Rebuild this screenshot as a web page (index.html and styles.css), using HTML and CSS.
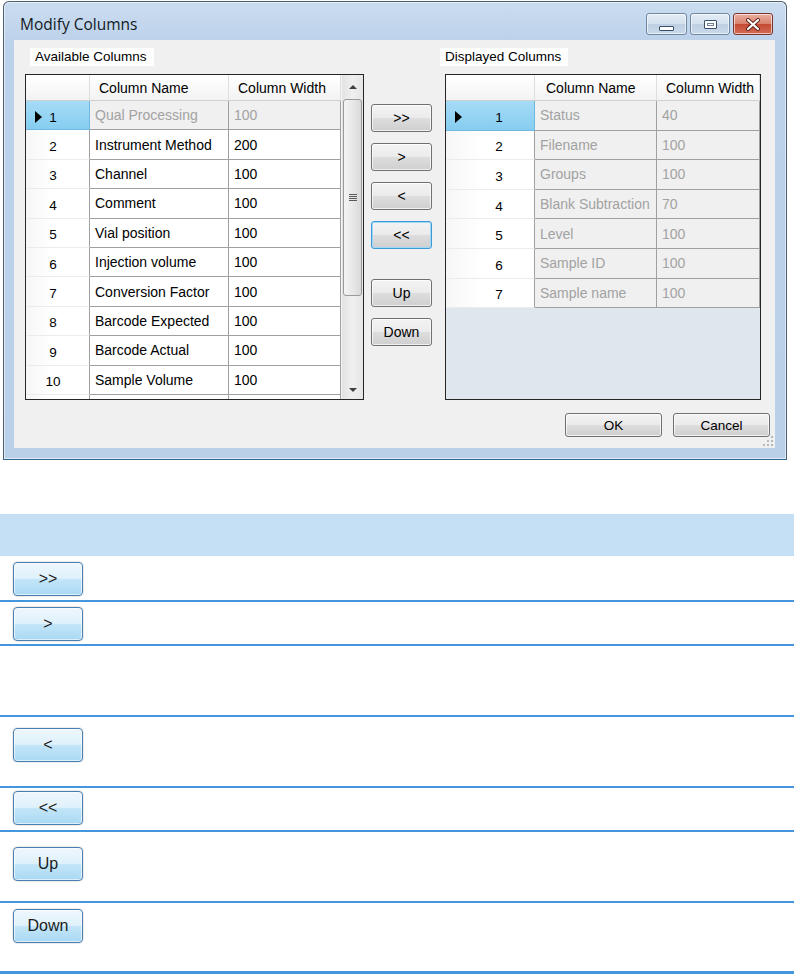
FILE: index.html
```html
<!DOCTYPE html>
<html lang="en">
<head>
  <meta charset="UTF-8">
  <title>Modify Columns</title>
  <link rel="stylesheet" href="styles.css">
</head>
<body>

  <!-- Dialog -->
  <div class="window">
    <div class="titlebar">
      <span class="title">Modify Columns</span>
      <div class="controls">
        <span class="ctl min"><i></i></span>
        <span class="ctl max"><i></i></span>
        <span class="ctl close">
          <svg width="16" height="13" viewBox="0 0 16 13">
            <path d="M3 2 L13 11 M13 2 L3 11" stroke="#5b2119" stroke-width="4" stroke-linecap="round"/>
            <path d="M3 2 L13 11 M13 2 L3 11" stroke="#ffffff" stroke-width="2.2" stroke-linecap="round"/>
          </svg>
        </span>
      </div>
    </div>

    <div class="client">
      <div class="lists">
        <div class="panel left-panel">
          <div class="label">Available Columns</div>
          <div class="grid">
            <div class="rows">
              <div class="row head">
                <div class="rh"></div>
                <div class="c name">Column Name</div>
                <div class="c width">Column Width</div>
              </div>
              <div class="row off">
                <div class="rh sel"><b class="arrow"></b>1</div>
                <div class="c name">Qual Processing</div>
                <div class="c width">100</div>
              </div>
              <div class="row"><div class="rh">2</div><div class="c name">Instrument Method</div><div class="c width">200</div></div>
              <div class="row"><div class="rh">3</div><div class="c name">Channel</div><div class="c width">100</div></div>
              <div class="row"><div class="rh">4</div><div class="c name">Comment</div><div class="c width">100</div></div>
              <div class="row"><div class="rh">5</div><div class="c name">Vial position</div><div class="c width">100</div></div>
              <div class="row"><div class="rh">6</div><div class="c name">Injection volume</div><div class="c width">100</div></div>
              <div class="row"><div class="rh">7</div><div class="c name">Conversion Factor</div><div class="c width">100</div></div>
              <div class="row"><div class="rh">8</div><div class="c name">Barcode Expected</div><div class="c width">100</div></div>
              <div class="row"><div class="rh">9</div><div class="c name">Barcode Actual</div><div class="c width">100</div></div>
              <div class="row"><div class="rh">10</div><div class="c name">Sample Volume</div><div class="c width">100</div></div>
              <div class="row"><div class="rh"></div><div class="c name"></div><div class="c width"></div></div>
            </div>
            <div class="vscroll">
              <div class="sb-btn"><b class="tri up"></b></div>
              <div class="thumb"><i></i><i></i><i></i><i></i></div>
              <div class="sb-fill"></div>
              <div class="sb-btn"><b class="tri down"></b></div>
            </div>
          </div>
        </div>

        <div class="movers">
          <button class="btn">&gt;&gt;</button>
          <button class="btn">&gt;</button>
          <button class="btn">&lt;</button>
          <button class="btn focus">&lt;&lt;</button>
          <button class="btn gap">Up</button>
          <button class="btn">Down</button>
        </div>

        <div class="panel right-panel">
          <div class="label">Displayed Columns</div>
          <div class="grid shown">
            <div class="rows">
              <div class="row head">
                <div class="rh"></div>
                <div class="c name">Column Name</div>
                <div class="c width">Column Width</div>
              </div>
              <div class="row off"><div class="rh sel"><b class="arrow"></b>1</div><div class="c name">Status</div><div class="c width">40</div></div>
              <div class="row off"><div class="rh">2</div><div class="c name">Filename</div><div class="c width">100</div></div>
              <div class="row off"><div class="rh">3</div><div class="c name">Groups</div><div class="c width">100</div></div>
              <div class="row off"><div class="rh">4</div><div class="c name">Blank Subtraction</div><div class="c width">70</div></div>
              <div class="row off"><div class="rh">5</div><div class="c name">Level</div><div class="c width">100</div></div>
              <div class="row off"><div class="rh">6</div><div class="c name">Sample ID</div><div class="c width">100</div></div>
              <div class="row off"><div class="rh">7</div><div class="c name">Sample name</div><div class="c width">100</div></div>
            </div>
          </div>
        </div>
      </div>

      <div class="actions">
        <button class="btn wide">OK</button>
        <button class="btn wide">Cancel</button>
      </div>

      <svg class="grip" width="10" height="10" viewBox="0 0 10 10">
        <rect x="8" y="0" width="2" height="2" fill="#b8b8b8"/>
        <rect x="4" y="4" width="2" height="2" fill="#b8b8b8"/>
        <rect x="8" y="4" width="2" height="2" fill="#b8b8b8"/>
        <rect x="0" y="8" width="2" height="2" fill="#b8b8b8"/>
        <rect x="4" y="8" width="2" height="2" fill="#b8b8b8"/>
        <rect x="8" y="8" width="2" height="2" fill="#b8b8b8"/>
      </svg>
    </div>
  </div>

  <!-- Button reference table -->
  <div class="ref">
    <div class="ref-head"></div>
    <div class="ref-row first p6"><span class="pic">&gt;&gt;</span></div>
    <div class="ref-row short p5"><span class="pic">&gt;</span></div>
    <div class="ref-row tall"></div>
    <div class="ref-row tall p11"><span class="pic">&lt;</span></div>
    <div class="ref-row short p3"><span class="pic">&lt;&lt;</span></div>
    <div class="ref-row tall p15"><span class="pic">Up</span></div>
    <div class="ref-row last p6"><span class="pic">Down</span></div>
  </div>

</body>
</html>
```

FILE: styles.css
```css
* {
  box-sizing: border-box;
}
body {
  margin: 0;
  background-color: #ffffff;
  font-family: "Liberation Sans", Arial, sans-serif;
  color: #000000;
}

/* Window frame */
.window {
  width: 784px;
  height: 459px;
  margin: 1px 0 0 3px;
  border: 1px solid #4b5d70;
  border-bottom-color: #2e6890;
  border-radius: 6px 6px 0 0;
  background: linear-gradient(to bottom, #cbdcef 0px, #bcd2ea 40px, #b9d0e9 100%);
  box-shadow: inset 0 0 0 1px rgba(255,255,255,0.55);
  display: flex;
  flex-direction: column;
}
.titlebar {
  height: 38px;
  display: flex;
  justify-content: space-between;
  align-items: flex-start;
  padding: 0 13px 0 16px;
}
.title {
  margin-top: 12px;
  font-family: "Open Sans", "Noto Sans", sans-serif;
  font-size: 15.5px;
  line-height: 20px;
  color: #121a24;
}
.controls {
  display: flex;
  gap: 3px;
  margin-top: 11px;
}
.ctl {
  width: 40px;
  height: 22px;
  border: 1px solid #6e88a4;
  border-radius: 3px;
  background: linear-gradient(to bottom, #e4edf7 0%, #d3e0ee 48%, #bfd0e4 52%, #c9d8ea 100%);
  box-shadow: inset 0 0 0 1px rgba(255,255,255,0.6);
  display: flex;
  justify-content: center;
}
.ctl.min {
  width: 41px;
  align-items: flex-end;
  padding-bottom: 3px;
}
.ctl.min i {
  width: 15px;
  height: 5px;
  background: #ffffff;
  border: 1px solid #39506a;
  border-radius: 1px;
}
.ctl.max {
  align-items: center;
}
.ctl.max i {
  width: 13px;
  height: 9px;
  border: 1px solid #39506a;
  border-radius: 1px;
  background: #ffffff;
  box-shadow: inset 0 0 0 2px #ffffff, inset 0 0 0 3px #6d8299;
}
.ctl.close {
  align-items: center;
  border-color: #7a3429;
  background: linear-gradient(to bottom, #eab0a2 0%, #d9826f 48%, #c54a33 52%, #d26c55 100%);
}

/* Client area */
.client {
  position: relative;
  height: 408px;
  margin: 0 11px 0 10px;
  padding: 8px 0 0 11px;
  background-color: #f0f0f0;
  font-size: 14px;
}
.lists {
  display: flex;
  align-items: flex-start;
}
.panel {
  display: flex;
  flex-direction: column;
  align-items: flex-start;
}
.left-panel {
  width: 339px;
}
.right-panel {
  width: 316px;
  margin-left: 13px;
}
.label {
  height: 18px;
  line-height: 18px;
  padding: 0 7px 0 5px;
  background-color: #ffffff;
  font-size: 13.5px;
  margin-left: 5px;
  margin-bottom: 8px;
}
.right-panel .label {
  margin-left: -5px;
}

/* Data grids */
.grid {
  width: 100%;
  height: 326px;
  border: 1px solid #262626;
  background-color: #ffffff;
  display: flex;
  overflow: hidden;
}
.grid.shown {
  background-color: #dfe6ee;
}
.rows {
  display: flex;
  flex-direction: column;
}
.row {
  display: flex;
  height: 29.4px;
  flex-shrink: 0;
}
.shown .row {
  height: 29.6px;
}
.row.head {
  height: 26px;
}
.rh, .c {
  height: 100%;
  display: flex;
  align-items: center;
  white-space: nowrap;
  overflow: hidden;
}
.rh {
  position: relative;
  width: 64px;
  justify-content: center;
  padding: 4px 9px 0 0;
  font-size: 13.5px;
  border-right: 1px solid #a0a0a0;
  border-bottom: 1px solid #ececec;
  background: linear-gradient(to right, #f6f6f6, #ffffff 40%);
}
.shown .rh {
  width: 89px;
  padding: 4px 0 0 18px;
}
.c {
  padding-left: 5px;
  border-right: 1px solid #a0a0a0;
  border-bottom: 1px solid #a0a0a0;
}
.c.name {
  width: 139px;
}
.c.width {
  width: 112px;
}
.shown .c.name {
  width: 122px;
}
.shown .c.width {
  width: 103px;
}
.head .rh, .head .c {
  padding-top: 0;
  background: linear-gradient(to bottom, #ffffff, #f3f3f3);
  border-right-color: #dedede;
  border-bottom-color: #cfcfcf;
}
.head .c {
  padding-left: 9px;
}
.shown .head .c.name {
  padding-left: 11px;
}
.off .c {
  background-color: #f0f0f0;
  color: #a2a2a2;
}
.rh.sel {
  background: linear-gradient(to bottom, #a6dbf6, #86cdf1);
  border-right-color: #70b8df;
  border-bottom-color: #70b8df;
}
.arrow {
  position: absolute;
  left: 9px;
  top: 10px;
  width: 0;
  height: 0;
  border-top: 6px solid transparent;
  border-bottom: 6px solid transparent;
  border-left: 7px solid #000000;
}

/* Vertical scrollbar */
.vscroll {
  width: 22px;
  display: flex;
  flex-direction: column;
  background: linear-gradient(to right, #e3e3e3, #efefef 50%, #e6e6e6);
  border-left: 1px solid #f4f4f4;
}
.sb-btn {
  height: 24px;
  display: flex;
  align-items: center;
  justify-content: center;
  flex-shrink: 0;
}
.tri {
  width: 0;
  height: 0;
  border-left: 4px solid transparent;
  border-right: 4px solid transparent;
}
.tri.up {
  border-bottom: 4px solid #404040;
}
.tri.down {
  border-top: 4px solid #404040;
  margin-top: 6px;
}
.thumb {
  height: 197px;
  margin: 0 1px;
  border: 1px solid #9a9a9a;
  border-radius: 3px;
  background: linear-gradient(to right, #f4f4f4, #e8e8e8 50%, #d9d9d9);
  display: flex;
  flex-direction: column;
  justify-content: center;
  align-items: center;
  gap: 1px;
}
.thumb i {
  width: 8px;
  height: 1px;
  background-color: #5a5a5a;
}
.sb-fill {
  flex: 1;
}

/* Buttons */
.btn {
  height: 28px;
  padding: 0;
  border: 1px solid #707070;
  border-radius: 3px;
  background: linear-gradient(to bottom, #f3f3f3 0%, #ebebeb 48%, #dddddd 52%, #cfcfcf 100%);
  box-shadow: inset 0 0 0 1px rgba(255,255,255,0.7);
  font-family: "Liberation Sans", Arial, sans-serif;
  font-size: 14px;
  color: #000000;
}
.btn.focus {
  border-color: #3c9ad6;
  box-shadow: inset 0 0 0 1px #9fd9f6;
}
.movers {
  width: 61px;
  margin: 56px 0 0 7px;
  display: flex;
  flex-direction: column;
  gap: 11px;
}
.movers .gap {
  margin-top: 19px;
}
.actions {
  display: flex;
  justify-content: flex-end;
  gap: 11px;
  margin-top: 13px;
  padding-right: 5px;
}
.btn.wide {
  width: 97px;
  height: 24px;
  font-size: 13.5px;
}
.grip {
  position: absolute;
  right: 2px;
  bottom: 2px;
}

/* Reference table */
.ref {
  margin-top: 54px;
}
.ref-head {
  height: 42px;
  background-color: #c5e0f5;
}
.ref-row {
  padding-left: 13px;
  border-bottom: 2px solid #4497df;
}
.ref-row.first {
  height: 46px;
}
.ref-row.short {
  height: 44px;
}
.ref-row.tall {
  height: 71px;
}
.ref-row.last {
  height: 72px;
  border-bottom-width: 4px;
}
.p3 { padding-top: 3px; }
.p5 { padding-top: 5px; }
.p6 { padding-top: 6px; }
.p11 { padding-top: 11px; }
.p15 { padding-top: 15px; }
.pic {
  width: 70px;
  height: 34px;
  display: flex;
  align-items: center;
  justify-content: center;
  border: 1px solid #4a7fb2;
  border-radius: 4px;
  background: linear-gradient(to bottom, #eef7fd 0%, #dff1fb 48%, #c2e5f8 52%, #a9d9f3 100%);
  box-shadow: 0 0 0 1px #ececec, inset 0 0 0 1px rgba(255,255,255,0.6);
  font-size: 16px;
  color: #1c1c1c;
}
```
